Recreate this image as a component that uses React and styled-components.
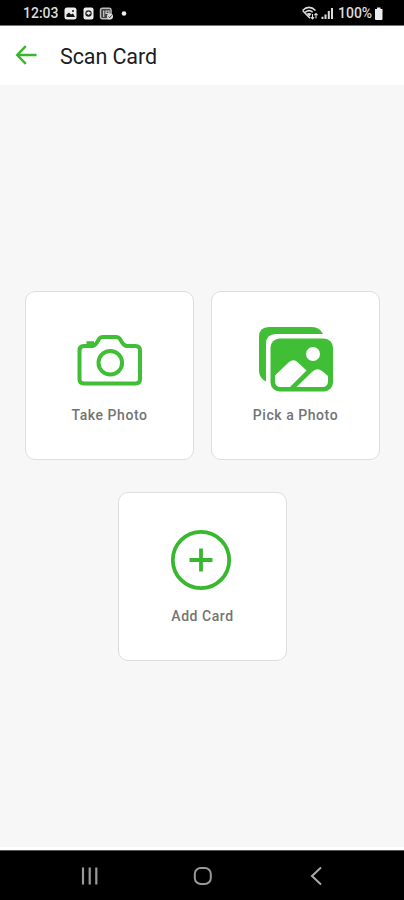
import React from "react";
import styled, { createGlobalStyle } from "styled-components";

const GlobalStyle = createGlobalStyle`
*{
box-sizing: border-box;
}
body{
margin: 0;
font-family: Roboto, "Noto Sans", sans-serif;
background-color: #f7f7f7;
}
`

const Screen = styled.div`
display: flex;
flex-direction: column;
width: 404px;
height: 900px;
background-color: #f7f7f7;
`

const StatusBar = styled.div`
display: flex;
align-items: center;
height: 26px;
padding: 0 20px 0 23px;
background-color: #000;
color: #dcdcdc;
border-bottom: 1px solid #777;
`
const StatusText = styled.span`
width: ${props => props.$width}px;
font-size: 14px;
font-weight: 500;
line-height: 26px;
white-space: nowrap;
`
const StatusIcons = styled.svg`
display: block;
width: ${props => props.$width}px;
height: 18px;
`
const Spacer = styled.div`
flex: 1;
`

const Header = styled.header`
display: flex;
align-items: center;
height: 59px;
padding-left: 15px;
background-color: #fff;
`
const BackButton = styled.button`
display: flex;
width: 45px;
padding: 0 0 1px;
border: none;
background: none;
`
const Title = styled.h1`
margin: 0;
padding-top: 2px;
font-size: 21.5px;
font-weight: 400;
line-height: 28px;
letter-spacing: -0.1px;
color: #1c1c1c;
`

const Body = styled.main`
flex: 1;
display: flex;
flex-direction: column;
align-items: center;
gap: 32px;
padding-top: 206px;
border-bottom: 3px solid #fff;
`
const CardRow = styled.div`
display: flex;
gap: 17px;
margin-left: 1px;
`
const Card = styled.button`
display: flex;
flex-direction: column;
align-items: center;
width: 169px;
height: 169px;
padding: 30px 0 0;
border: 1px solid #dedede;
border-radius: 10px;
background-color: #fff;
font-family: inherit;
`
const IconBox = styled.span`
display: flex;
align-items: center;
justify-content: center;
height: 76px;
padding: 0 ${props => props.$shift || 0}px ${props => props.$lift || 0}px 0;
`
const CardText = styled.span`
margin-top: 7px;
font-size: 14px;
font-weight: 500;
line-height: 20px;
letter-spacing: ${props => props.$spacing}px;
color: #747474;
`

const NavBar = styled.nav`
display: flex;
align-items: center;
justify-content: space-between;
height: 50px;
padding: 0 81px 0 79px;
border-top: 1px solid #555;
background-color: #000;
`
const HomeIcon = styled.svg`
margin-right: 2px;
`

const GREEN = "#40bf36"

function BackIcon() {
    return (
        <svg width="22" height="20" viewBox="0 0 22 20" fill="none" stroke="#35b82b" strokeWidth="2.4">
            <path d="M21.5 10H2.5M10.8 1.2L2.2 10L10.8 18.8" />
        </svg>
    )
}

function CameraIcon() {
    return (
        <svg width="66" height="52" viewBox="0 0 66 52" fill="none" stroke={GREEN} strokeWidth="4">
            <path d="M6.5 12H15C18 12 19 10 20.5 7.5L22 5Q23.3 3 26 3H39Q41.7 3 43 5L44.5 7.5C46 10 47 12 50 12H58.5Q63 12 63 16.5V45Q63 49.5 58.5 49.5H7Q2.5 49.5 2.5 45V16.5Q2.5 12 6.5 12Z" />
            <circle cx="33.3" cy="28.7" r="11.8" />
            <path d="M9.5 7.2H17V12H9.5Z" fill={GREEN} stroke="none" />
        </svg>
    )
}

function GalleryIcon() {
    return (
        <svg width="76" height="66" viewBox="0 0 76 66">
            <path fill={GREEN} d="M11 1H54Q61.5 1 65 8H18Q8 8 8 18V55.5Q1 52 1 45V11Q1 1 11 1Z" />
            <rect x="12.5" y="12.5" width="62.5" height="53" rx="9" fill={GREEN} />
            <circle cx="55" cy="28" r="7" fill="#fff" />
            <path fill="#fff" d="M17 49.5L30 37Q35 32 40 36.5L48.5 44.5L32 61H23Q17 61 17 55Z" />
            <path fill="#fff" d="M38.5 61L54 46Q59 41 64 45L70 50V55Q70 61 64 61Z" />
        </svg>
    )
}

function AddIcon() {
    return (
        <svg width="62" height="62" viewBox="0 0 62 62" fill="none" stroke="#38b82e" strokeWidth="3.8">
            <circle cx="31" cy="31" r="28.2" />
            <path d="M31 19.5V42.5M19.5 31H42.5" />
        </svg>
    )
}

// notifications shown to the right of the clock
function NotificationIcons() {
    return (
        <StatusIcons $width={66} viewBox="0 0 66 18">
            <rect x="1.5" y="3.5" width="12" height="12" rx="2.5" fill="#ededed" />
            <path d="M3.5 13V10.5L6 8.5L8 10.5L10 9.5L12 13Z" fill="#111" />
            <circle cx="10" cy="7" r="1" fill="#111" />
            <rect x="20.5" y="3.5" width="10" height="12" rx="2" fill="#ededed" />
            <circle cx="25.5" cy="9.5" r="3.2" fill="#222" />
            <path d="M23 9L25.5 7.5L28 9L25.5 11Z" fill="#ededed" />
            <rect x="37.5" y="4.2" width="10.6" height="10.6" rx="2" fill="#444" stroke="#bbb" strokeWidth="1.4" />
            <path d="M40.7 6.5V13M43 7H46V9.5H43Z" stroke="#ccc" strokeWidth="1.2" fill="none" />
            <circle cx="47" cy="12.5" r="3" fill="#ddd" />
            <path d="M45.5 12.5L46.7 13.7L48.6 11.3" stroke="#333" fill="none" />
            <circle cx="61" cy="9.5" r="2.3" fill="#ededed" />
        </StatusIcons>
    )
}

function SignalIcons() {
    return (
        <StatusIcons $width={36} viewBox="0 0 36 18" fill="none" stroke="#ddd" strokeWidth="1.5">
            <path d="M0.5 6.5Q7 0.3 13.5 6.5" />
            <path d="M0.8 6.8L8 14.2M3.3 8.2Q7 5 10.7 8.2" />
            <path d="M4.5 9.8Q7 8 9.5 9.8L7.5 12.5Z" fill="#ddd" stroke="none" />
            <path d="M10.5 10V15M8.8 13.2L10.5 15L12.2 13.2M14 14.5V9.5M12.4 11.2L14 9.5L15.6 11.2" strokeWidth="1.1" />
            <path d="M20.5 15V12.8M23.5 15V10.5M26.8 15V7M30 15V4" strokeWidth="2" />
        </StatusIcons>
    )
}

function BatteryIcon() {
    return (
        <StatusIcons $width={10} viewBox="0 0 10 18">
            <path fill="#ededed" d="M3 3.5H6.5V5H8.5V15Q8.5 16 7.5 16H2Q1 16 1 15V5H3Z" />
        </StatusIcons>
    )
}

function ScanOption({ icon, text, spacing, shift, lift }) {
    return (
        <Card>
            <IconBox $shift={shift} $lift={lift}>{icon}</IconBox>
            <CardText $spacing={spacing}>{text}</CardText>
        </Card>
    )
}

function App() {
    return (
        <Screen>
            <GlobalStyle />
            <StatusBar>
                <StatusText $width={40}>12:03</StatusText>
                <NotificationIcons />
                <Spacer />
                <SignalIcons />
                <StatusText $width={36}>100%</StatusText>
                <BatteryIcon />
            </StatusBar>
            <Header>
                <BackButton aria-label="Back"><BackIcon /></BackButton>
                <Title>Scan Card</Title>
            </Header>
            <Body>
                <CardRow>
                    <ScanOption icon={<CameraIcon />} text="Take Photo" spacing={0.55} />
                    <ScanOption icon={<GalleryIcon />} text="Pick a Photo" spacing={0.55} lift={2} />
                </CardRow>
                <CardRow>
                    <ScanOption icon={<AddIcon />} text="Add Card" spacing={0.55} shift={4} lift={3} />
                </CardRow>
            </Body>
            <NavBar>
                <svg width="20" height="20" viewBox="0 0 20 20" stroke="#999" strokeWidth="2.2">
                    <path d="M4 1.5V18.5M10.7 1.5V18.5M17.3 1.5V18.5" />
                </svg>
                <HomeIcon width="20" height="20" viewBox="0 0 20 20" fill="none" stroke="#999" strokeWidth="2">
                    <rect x="1.8" y="2" width="16" height="16" rx="6" />
                </HomeIcon>
                <svg width="14" height="20" viewBox="0 0 14 20" fill="none" stroke="#aaa" strokeWidth="2">
                    <path d="M12 1.5L3 10L12 18.5" />
                </svg>
            </NavBar>
        </Screen>
    )
}

export default App
